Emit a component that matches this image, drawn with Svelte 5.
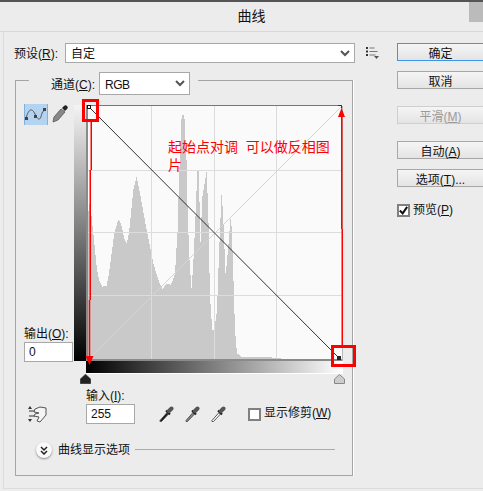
<script>
	// histogram outline, traced at 3x from x=85 y=130
	const histogram = [
		[6,692],[8,260],[14,220],[20,262],[28,340],[36,420],[44,455],[52,470],[65,468],[72,430],[80,370],[88,310],
		[100,268],[108,280],[118,325],[125,340],[132,310],[145,180],[155,140],[165,190],[185,300],[197,360],[205,400],
		[220,450],[232,478],[245,460],[258,465],[270,430],[278,300],[282,150],[290,-45],[298,-45],[305,100],[308,250],
		[314,400],[320,480],[326,380],[332,250],[337,122],[342,125],[346,350],[352,200],[365,122],[370,250],[375,500],
		[382,600],[388,600],[396,540],[403,350],[410,185],[415,270],[422,438],[430,350],[438,248],[444,400],[450,600],
		[456,670],[470,680],[540,680],[600,687],[700,689],[720,692]
	].map((p) => p.join(',')).join(' ');

	const grid = [151, 214, 276];
	const gridY = [170, 232, 295];

	const droppers = ['#111', '#888', '#fff'];
	const buttons = [
		{ text: '确定', cls: 'primary' },
		{ text: '取消', cls: 'near' },
		{ text: '平滑', key: 'M', cls: 'far off' },
		{ text: '自动', key: 'A', cls: 'far' },
		{ text: '选项', key: 'T', tail: '...', cls: 'near' }
	];
</script>

<div class="dialog">
	<header class="title">
		<span>曲线</span>
		<i class="close"></i>
	</header>

	<div class="body">
		<div class="left">
			<div class="preset">
				<span class="label">预设(<u>R</u>):</span>
				<div class="select wide">
					<span>自定</span>
					<svg width="10" height="7" viewBox="0 0 10 7"><path d="M1 1l4 4 4-4" fill="none" stroke="#555" stroke-width="2"/></svg>
				</div>
				<svg class="list" width="13" height="12" viewBox="0 0 13 12">
					<path d="M0 1h2M0 4.500h2M0 8h2" stroke="#333" stroke-width="2"/>
					<path d="M3.500 1h5M3.500 4.500h8M3.500 8h6" stroke="#777" stroke-width="1"/>
					<path d="M8 9h5l-2.500 3z" fill="#555"/>
				</svg>
			</div>

			<section class="group">
				<div class="legend">
					<span class="label">通道(<u>C</u>):</span>
					<div class="select channel">
						<span>RGB</span>
						<svg width="10" height="7" viewBox="0 0 10 7"><path d="M1 1l4 4 4-4" fill="none" stroke="#555" stroke-width="2"/></svg>
					</div>
				</div>

				<div class="curve">
					<div class="side">
						<div class="tools">
							<span class="tool on">
								<svg width="24" height="21" viewBox="0 0 24 21">
									<path d="M2 14C5 4 8 4 11 10s5 8 7-1l3-4" fill="none" stroke="#555" stroke-width="1"/>
									<path d="M1 13h3v3H1zM10 11h3v3h-3zM19 4h3v3h-3z" fill="#444"/>
								</svg>
							</span>
							<svg class="pencil" width="16" height="19" viewBox="0 0 16 19">
								<path d="M1 17l1-5 7-8 4 3-7 8z" fill="#888" stroke="#555" stroke-width=".8"/>
								<path d="M10 3l2-2a2 2 0 0 1 3 3l-2 2z" fill="#222"/>
							</svg>
						</div>
						<div class="field">
							<span class="label">输出(<u>O</u>):</span>
							<input value="0" />
						</div>
					</div>
					<div class="ramp-v"></div>
					<div class="plot">
						<svg width="257" height="256" viewBox="86 105 257 256">
							<rect x="86" y="105" width="257" height="256" fill="#fafafa"/>
							<polygon class="crisp" transform="translate(85 130) scale(.3333)" points={histogram} fill="#c9c9c9"/>
							{#each grid as x}
								<line x1={x + .5} x2={x + .5} y1="106" y2="360" stroke="#dcdcdc"/>
							{/each}
							{#each gridY as y}
								<line x1="88" x2="342" y1={y + .5} y2={y + .5} stroke="#dcdcdc"/>
							{/each}
							<line class="crisp" x1="88" y1="360" x2="342" y2="106" stroke="#d4d4d4"/>
							<path d="M87 105v255h255" fill="none" stroke="#8a8a8a" stroke-width="2"/>
							<path d="M87 105.500h255" fill="none" stroke="#777"/>
							<path d="M342.500 106v255" stroke="#b5b5b5"/>
							<path d="M338 105.500h3.500v3" fill="none" stroke="#333"/>
							<line x1="89" y1="107" x2="339" y2="358" stroke="#000" stroke-width=".8"/>
							<rect x="87.500" y="105.500" width="3" height="3" fill="#fff" stroke="#111"/>
							<rect x="337" y="356" width="4" height="4" fill="#222"/>
						</svg>
						<div class="ramp-h"></div>
						<div class="sliders">
							<svg width="11" height="10" viewBox="0 0 11 10"><path d="M5.500 0L11 5v5H0V5z" fill="#222" stroke="#999" stroke-width=".6"/></svg>
							<svg width="11" height="10" viewBox="0 0 11 10"><path d="M5.500 .5L10.500 5v4.500H.5V5z" fill="#ccc" stroke="#888"/></svg>
						</div>
					</div>
				</div>

				<div class="input-row">
					<svg class="hand" width="20" height="18" viewBox="0 0 20 18">
						<path d="M2 1l-2 3h4zM0 14l2 3 2-3z" fill="#333"/>
						<path d="M1 6h5M1 11h6" stroke="#333"/>
						<path d="M7 4l5-2 6 1v7l-6 7-3-1 2-4-5-1 1-2 4-1-5-1z" fill="#f4f4f4" stroke="#555"/>
					</svg>
					<div class="field input-field">
						<span class="label">输入(<u>I</u>):</span>
						<input value="255" />
					</div>
					<div class="droppers">
						{#each droppers as fill}
							<svg width="16" height="16" viewBox="0 0 16 16">
								<path d="M2 14.500L9 6.500l1.500 1.500-7 7.500H2z" fill={fill} stroke="#555"/>
								<path d="M8 4.500l4 4" stroke="#222" stroke-width="2"/>
								<path d="M11 5l2.500-2.500" stroke="#555" stroke-width="4" stroke-linecap="round"/>
							</svg>
						{/each}
					</div>
					<div class="clip">
						<i class="box"></i>
						<span>显示修剪(<u>W</u>)</span>
					</div>
				</div>

				<div class="expand">
					<span class="round">
						<svg width="8" height="9" viewBox="0 0 8 9"><path d="M1 1l3 3 3-3M1 5l3 3 3-3" fill="none" stroke="#222" stroke-width="1.500"/></svg>
					</span>
					<span>曲线显示选项</span>
					<i class="rule"></i>
				</div>
			</section>
		</div>

		<div class="right">
			{#each buttons as b}
				<button class={b.cls}>{b.text}{#if b.key}(<u>{b.key}</u>){/if}{b.tail || ''}</button>
			{/each}
			<div class="preview">
				<i class="box">
					<svg width="9" height="9" viewBox="0 0 11 11"><path d="M1 5.500l3.500 3.500 5.500-8" fill="none" stroke="#111" stroke-width="2.500"/></svg>
				</i>
				<span>预览(<u>P</u>)</span>
			</div>
		</div>
	</div>

	<!-- red marks drawn on top of the screenshot -->
	<svg class="marks" width="483" height="491" viewBox="0 0 483 491">
		<g fill="none" stroke="#f00">
			<rect x="83.500" y="100.500" width="14" height="20" stroke-width="3"/>
			<rect x="332.500" y="346.500" width="22" height="19" stroke-width="3"/>
			<path d="M91.250 122v48M90.250 170v130M89.500 300v56" stroke-width="1.500"/>
			<path d="M341.750 116v113M342.250 229v116" stroke-width="1.500"/>
		</g>
		<path d="M85.500 356h8l-4 9zM341.500 108l3.500 9h-7z" fill="#f00"/>
	</svg>
	<p class="note">起始点对调&nbsp;&nbsp;可以做反相图片</p>
</div>

<style>
	:global(body) {
		margin: 0;
	}

	.dialog {
		position: relative;
		width: 483px;
		height: 491px;
		overflow: hidden;
		background: #ececec;
		border-top: 2px solid #555;
		box-sizing: border-box;
		font: 12px/16px "Liberation Sans", "Noto Sans CJK SC", sans-serif;
		color: #111;
	}

	.title {
		position: relative;
		display: flex;
		align-items: center;
		justify-content: center;
		height: 30px;
		padding: 0 0 2px 20px;
		box-sizing: border-box;
		font-size: 14px;
		border-bottom: 1px solid #d8d8d8;
	}

	.close {
		position: absolute;
		top: 0;
		right: 0;
		width: 14px;
		height: 20px;
		background: #bbb;
	}

	.body {
		display: flex;
		width: 479px;
		height: 445px;
		margin-left: 3px;
		padding-top: 11px;
		border-left: 1px solid #dcdcdc;
		border-bottom: 1px solid #dcdcdc;
	}

	.left {
		width: 393px;
		flex: none;
	}

	.preset {
		display: flex;
		align-items: center;
		margin-left: 10px;
	}

	.preset .label {
		width: 51px;
		padding-top: 2px;
	}

	.legend .label {
		padding-top: 2px;
	}

	.select {
		display: flex;
		align-items: center;
		justify-content: space-between;
		box-sizing: border-box;
		background: #fff;
		border: 1px solid #a8a8a8;
		padding: 0 4px 0 5px;
	}

	.select span {
		padding-top: 2px;
	}

	.wide {
		width: 290px;
		height: 20px;
	}

	.channel {
		width: 91px;
		height: 23px;
		letter-spacing: -.5px;
	}

	.list {
		margin-left: 11px;
	}

	.group {
		width: 338px;
		height: 396px;
		box-sizing: border-box;
		margin: 17px 0 0 11px;
		border: 1px solid #a5a5a5;
		box-shadow: 1px 0 0 #fff;
	}

	.legend {
		display: flex;
		align-items: center;
		width: 169px;
		height: 23px;
		box-sizing: border-box;
		margin: -9px 0 0 13px;
		padding: 0 7px 0 22px;
		background: #ececec;
		gap: 4px;
	}

	.curve {
		display: flex;
		align-items: flex-start;
		margin-top: 10px;
		height: 280px;
	}

	.side {
		display: flex;
		flex-direction: column;
		justify-content: space-between;
		width: 50px;
		height: 257px;
		margin-left: 8px;
	}

	.tools {
		display: flex;
		align-items: center;
		gap: 4px;
		margin-top: -1px;
	}

	.tool {
		display: block;
		width: 24px;
		height: 21px;
	}

	.tool.on {
		background: #b3d3f0;
		box-shadow: inset 1px 0 0 #7fb0de, inset -1px 0 0 #7fb0de;
	}

	.tool svg,
	.plot svg,
	.hand {
		display: block;
	}

	.crisp {
		shape-rendering: crispEdges;
	}

	.field {
		display: flex;
		flex-direction: column;
	}

	.field .label {
		height: 16px;
		padding-top: 1px;
		box-sizing: border-box;
	}

	.field input {
		box-sizing: border-box;
		width: 49px;
		height: 20px;
		margin: 1px 0 0;
		padding: 0 4px;
		border: 1px solid #a8a8a8;
		background: #fff;
		font: 12px "Liberation Sans", sans-serif;
		color: #111;
		border-radius: 0;
		outline: none;
	}

	.ramp-v {
		width: 12px;
		height: 256px;
		background: linear-gradient(#f4f4f4, #000);
	}

	.plot {
		width: 257px;
	}

	.ramp-h {
		height: 12px;
		background: linear-gradient(90deg, #000, #fff);
		border-bottom: 1px solid #fff;
	}

	.sliders {
		display: flex;
		justify-content: space-between;
		margin: 0 -2px 0 -6px;
		height: 10px;
	}

	.input-row {
		display: flex;
		align-items: flex-end;
		margin: 2px 0 0 12px;
	}

	.hand {
		flex: none;
		margin-bottom: 1px;
	}

	.input-field {
		margin-left: 38px;
	}

	.droppers {
		display: flex;
		gap: 10px;
		margin: 0 0 2px 23px;
	}

	.clip,
	.preview {
		display: flex;
		align-items: center;
	}

	.clip {
		height: 20px;
		margin-left: 22px;
		gap: 3px;
	}

	.clip span {
		padding-bottom: 2px;
	}

	.box {
		display: flex;
		align-items: center;
		justify-content: center;
		width: 13px;
		height: 13px;
		box-sizing: border-box;
		border: 2px solid #808080;
		background: #fff;
	}

	.expand {
		display: flex;
		align-items: center;
		height: 16px;
		margin: 18px 17px 0 20px;
	}

	.round {
		display: flex;
		align-items: center;
		justify-content: center;
		width: 16px;
		height: 16px;
		margin-right: 6px;
		border-radius: 50%;
		background: #fafafa;
		box-shadow: 0 1px 2px #888;
	}

	.rule {
		flex: 1;
		height: 1px;
		margin: -2px 0 0 5px;
		background: #ababab;
	}

	.right {
		flex: none;
		width: 100px;
		display: flex;
		flex-direction: column;
		align-items: flex-start;
	}

	button {
		width: 86px;
		height: 18px;
		padding: 2px 0 0;
		border: 1px solid #a8a8a8;
		border-right: 0;
		border-radius: 0;
		background: linear-gradient(#f5f5f5, #e4e4e4);
		font: inherit;
		color: #111;
		box-sizing: border-box;
	}

	.primary {
		border-color: #3a96e8;
	}

	.near {
		margin-top: 10px;
	}

	.far {
		margin-top: 17px;
	}

	.off {
		color: #9a9a9a;
		border-color: #cfcfcf;
	}

	.preview {
		margin-top: 15px;
		gap: 3px;
	}

	.marks {
		position: absolute;
		top: -2px;
		left: 0;
		pointer-events: none;
	}

	.note {
		position: absolute;
		top: 136px;
		left: 168px;
		width: 168px;
		margin: 0;
		color: #f00;
		font-size: 14px;
		line-height: 18px;
	}
</style>
